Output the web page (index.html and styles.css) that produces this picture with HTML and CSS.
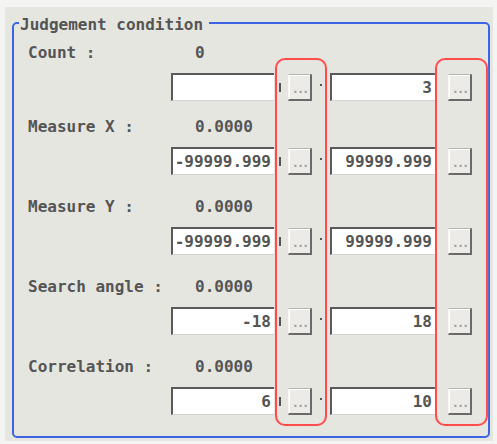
FILE: index.html
```html
<!DOCTYPE html>
<html lang="en">
    <head>
        <meta charset="UTF-8" />
        <meta name="viewport" content="width=device-width, initial-scale=1.0" />
        <title>Judgement condition</title>

        <link rel="stylesheet" href="styles.css">
    </head>
    <body>
        <div class="panel">
            <fieldset class="judge">
                <legend>Judgement condition</legend>
                <div class="rows">
                    <div class="group count">
                        <div class="label-row"><span class="label">Count :</span><span class="value">0</span></div>
                        <div class="range-row">
                            <div class="field lower"></div>
                            <span class="tick"></span>
                            <button class="dots">...</button>
                            <span class="sep"></span>
                            <div class="field upper">3</div>
                            <button class="dots upper-btn">...</button>
                        </div>
                    </div>
                    <div class="group">
                        <div class="label-row"><span class="label">Measure X :</span><span class="value">0.0000</span></div>
                        <div class="range-row">
                            <div class="field lower">-99999.999</div>
                            <span class="tick"></span>
                            <button class="dots">...</button>
                            <span class="sep"></span>
                            <div class="field upper">99999.999</div>
                            <button class="dots upper-btn">...</button>
                        </div>
                    </div>
                    <div class="group">
                        <div class="label-row"><span class="label">Measure Y :</span><span class="value">0.0000</span></div>
                        <div class="range-row">
                            <div class="field lower">-99999.999</div>
                            <span class="tick"></span>
                            <button class="dots">...</button>
                            <span class="sep"></span>
                            <div class="field upper">99999.999</div>
                            <button class="dots upper-btn">...</button>
                        </div>
                    </div>
                    <div class="group">
                        <div class="label-row"><span class="label">Search angle :</span><span class="value">0.0000</span></div>
                        <div class="range-row">
                            <div class="field lower">-18</div>
                            <span class="tick"></span>
                            <button class="dots">...</button>
                            <span class="sep"></span>
                            <div class="field upper">18</div>
                            <button class="dots upper-btn">...</button>
                        </div>
                    </div>
                    <div class="group">
                        <div class="label-row"><span class="label">Correlation :</span><span class="value">0.0000</span></div>
                        <div class="range-row">
                            <div class="field lower">6</div>
                            <span class="tick"></span>
                            <button class="dots">...</button>
                            <span class="sep"></span>
                            <div class="field upper">10</div>
                            <button class="dots upper-btn">...</button>
                        </div>
                    </div>
                </div>
            </fieldset>
            <div class="mark mark-lower"></div>
            <div class="mark mark-upper"></div>
        </div>
    </body>
</html>
```

FILE: styles.css
```css
body {
    margin: 0;
    padding: 7px 4px 3px 5px;
    background-color: #f4f4f2;
    font-family: "DejaVu Sans Mono", "Liberation Mono", monospace;
    font-size: 16px;
    font-weight: bold;
    color: #555555;
}

.panel {
    position: relative;
    width: 488px;
    height: 434px;
    box-sizing: border-box;
    padding: 5px 3px 4px 7px;
    background-color: #e6e6e1;
}

.judge {
    margin: 0;
    padding: 0 0 21px 0;
    border: 2px solid #3d64e4;
    border-radius: 5px;
}

.judge legend {
    margin-left: 5px;
    padding: 4px 6px 0 1px;
    line-height: 18px;
}

.rows {
    padding-top: 6px;
}

.group {
    margin-bottom: 19px;
}

.group.count {
    margin-bottom: 13px;
}

.group:last-child {
    margin-bottom: 0;
}

.label-row {
    display: flex;
    align-items: center;
    height: 24px;
    padding-left: 14px;
}

.label {
    width: 167px;
}

.range-row {
    display: flex;
    align-items: center;
    height: 28px;
    margin-top: 9px;
    padding-left: 157px;
}

.field {
    box-sizing: border-box;
    height: 28px;
    padding-right: 3px;
    background-color: #ffffff;
    border-top: 2px solid #5a5a5a;
    border-left: 2px solid #5a5a5a;
    border-bottom: 1px solid #d2d2ce;
    text-align: right;
    line-height: 25px;
    white-space: nowrap;
}

.field.lower {
    width: 103px;
}

.field.upper {
    width: 105px;
}

.tick {
    width: 2px;
    height: 9px;
    margin-left: 5px;
    background-color: #555555;
}

.dots {
    box-sizing: border-box;
    width: 24px;
    height: 27px;
    margin-left: 7px;
    padding: 4px 0 0 0;
    background-color: #ecebe7;
    border-top: 1px solid #b4b4b0;
    border-left: 1px solid #f8f8f6;
    border-right: 2px solid #6a6a6a;
    border-bottom: 2px solid #6a6a6a;
    box-shadow: inset 1px 1px 0 #ffffff;
    font-family: "DejaVu Sans Mono", monospace;
    font-size: 12px;
    font-weight: bold;
    letter-spacing: -2px;
    color: #a0a0a0;
}

.dots.upper-btn {
    margin-left: 13px;
}

.sep {
    width: 2px;
    height: 2px;
    margin: 0 8px 4px 8px;
    background-color: #555555;
}

.mark {
    position: absolute;
    top: 51px;
    height: 368px;
    box-sizing: border-box;
    border: 2px solid #ff4d4d;
    border-radius: 10px;
    box-shadow: 0 0 1px #ffc4c4, inset 0 0 1px #ffc4c4;
}

.mark-lower {
    left: 270px;
    width: 52px;
}

.mark-upper {
    left: 430px;
    width: 53px;
}
```
